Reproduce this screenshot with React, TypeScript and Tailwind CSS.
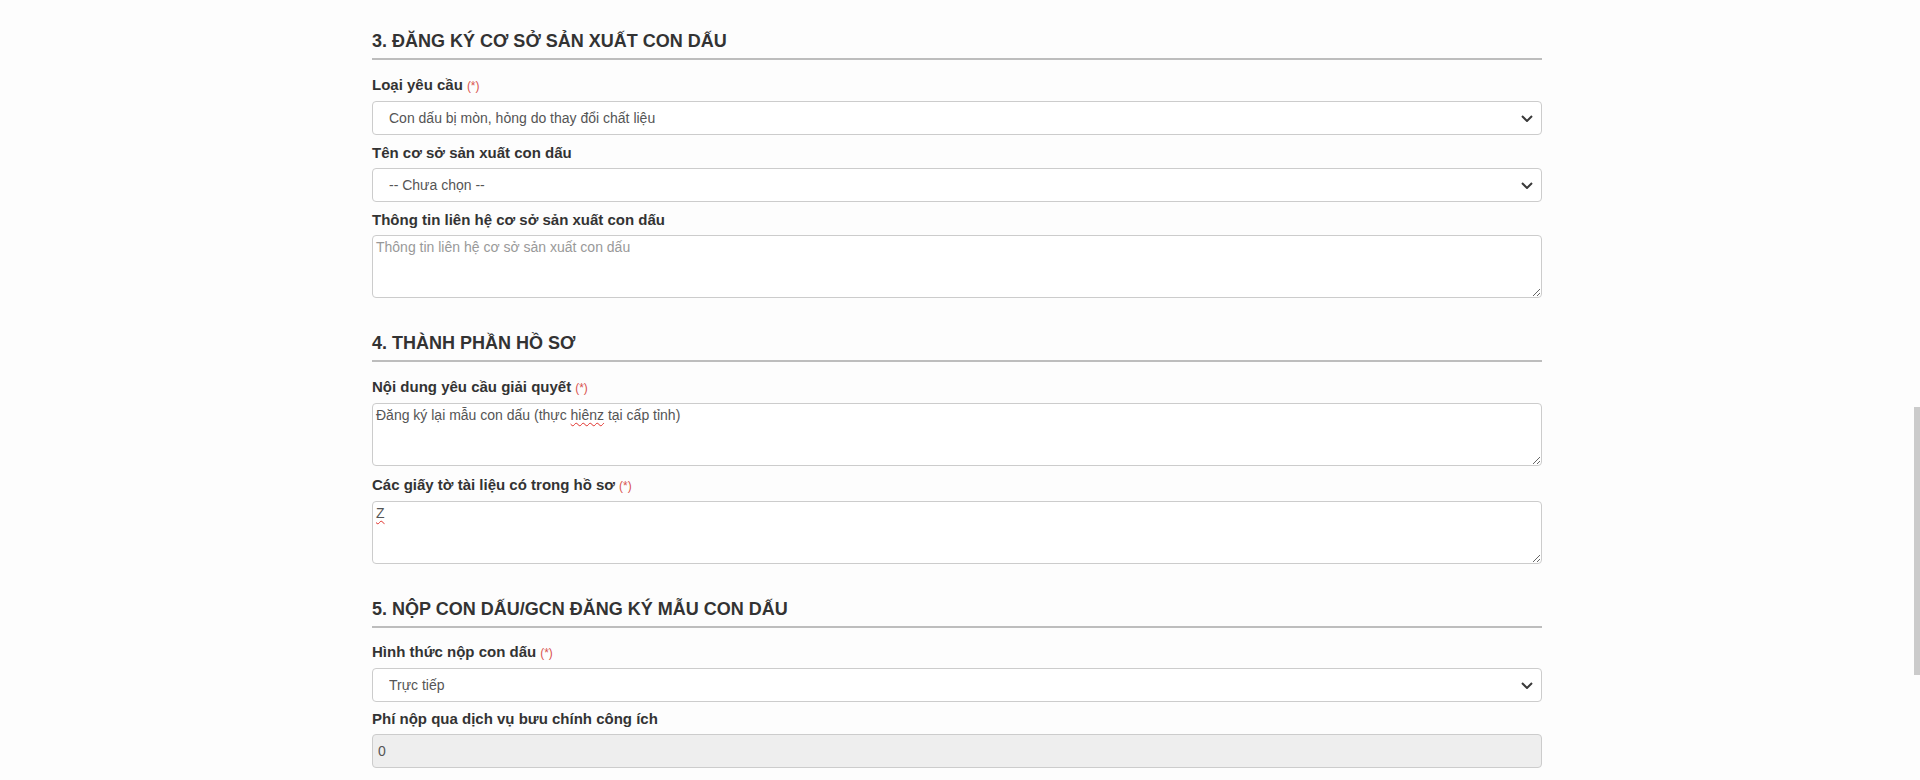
import type { ReactNode } from "react";

const font = { fontFamily: '"Liberation Sans", Arial, "Noto Sans", sans-serif' };

const Req = () => <span className="ml-[4px] text-[12px] font-normal text-[#d9534f]">(*)</span>;

const Label = ({ children, required }: { children: ReactNode; required?: boolean }) => (
  <label className="mb-[5px] block text-[15px] font-bold leading-[20px] text-[#333]">
    {children}
    {required && <Req />}
  </label>
);

const SelectBox = ({ value }: { value: string }) => (
  <div className="relative">
    <select
      defaultValue={value}
      className="block h-[34px] w-full appearance-none rounded-[4px] border border-[#ccc] bg-white pl-[16px] pr-[30px] text-[14px] text-[#555] outline-none"
    >
      <option>{value}</option>
    </select>
    <svg
      className="pointer-events-none absolute right-[9px] top-[14px]"
      width="12"
      height="7"
      viewBox="0 0 12 7"
      fill="none"
    >
      <polyline points="1,1 6,6 11,1" stroke="#3a3a3a" strokeWidth="2" />
    </svg>
  </div>
);

const AreaBox = ({ children, placeholder }: { children?: ReactNode; placeholder?: string }) => (
  <div className="h-[63px] w-full resize-y overflow-auto rounded-[4px] border border-[#ccc] bg-white px-[3px] pt-[1px] text-[14px] leading-[20px] text-[#555]">
    {children ?? <span className="text-[#999]">{placeholder}</span>}
  </div>
);

const Wavy = ({ children }: { children: ReactNode }) => (
  <span className="underline decoration-[#e0312b] decoration-wavy decoration-1 underline-offset-2">{children}</span>
);

const Heading = ({ children, first }: { children: ReactNode; first?: boolean }) => (
  <h3
    className={`${first ? "pt-[28px]" : "pt-[32px]"} border-b-2 border-[#bdbdbd] pb-[4px] text-[18px] font-bold leading-[26px] text-[#333]`}
  >
    {children}
  </h3>
);

export default function App() {
  return (
    <div className="relative min-h-[780px] bg-[#fdfdfd] pr-[6px]" style={font}>
      <div className="mx-auto w-[1170px]">
        <Heading first>3. ĐĂNG KÝ CƠ SỞ SẢN XUẤT CON DẤU</Heading>
        <div className="mt-[15px] flex flex-col gap-[8px]">
          <div>
            <Label required>Loại yêu cầu</Label>
            <SelectBox value="Con dấu bị mòn, hỏng do thay đổi chất liệu" />
          </div>
          <div>
            <Label>Tên cơ sở sản xuất con dấu</Label>
            <SelectBox value="-- Chưa chọn --" />
          </div>
          <div>
            <Label>Thông tin liên hệ cơ sở sản xuất con dấu</Label>
            <AreaBox placeholder="Thông tin liên hệ cơ sở sản xuất con dấu" />
          </div>
        </div>

        <Heading>4. THÀNH PHẦN HỒ SƠ</Heading>
        <div className="mt-[15px] flex flex-col gap-[9px]">
          <div>
            <Label required>Nội dung yêu cầu giải quyết</Label>
            <AreaBox>
              Đăng ký lại mẫu con dấu (thực <Wavy>hiênz</Wavy> tại cấp tỉnh)
            </AreaBox>
          </div>
          <div>
            <Label required>Các giấy tờ tài liệu có trong hồ sơ</Label>
            <AreaBox>
              <Wavy>Z</Wavy>
            </AreaBox>
          </div>
        </div>

        <Heading>5. NỘP CON DẤU/GCN ĐĂNG KÝ MẪU CON DẤU</Heading>
        <div className="mt-[14px] flex flex-col gap-[7px]">
          <div>
            <Label required>Hình thức nộp con dấu</Label>
            <SelectBox value="Trực tiếp" />
          </div>
          <div>
            <Label>Phí nộp qua dịch vụ bưu chính công ích</Label>
            <input
              disabled
              value="0"
              readOnly
              className="block h-[34px] w-full rounded-[4px] border border-[#ccc] bg-[#eeeeee] px-[5px] text-[14px] text-[#555]"
            />
          </div>
        </div>
      </div>

      {/* scrollbar thumb */}
      <div className="absolute right-0 top-[407px] h-[268px] w-[6px] bg-[#cbcbcb]" />
    </div>
  );
}
